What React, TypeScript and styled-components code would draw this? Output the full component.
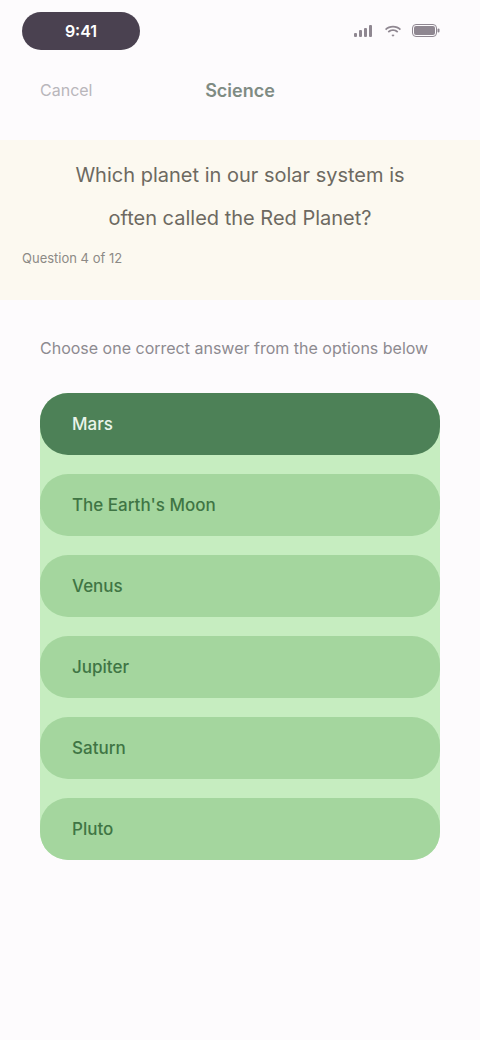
import React from "react";
import styled, { createGlobalStyle } from "styled-components";

const Global = createGlobalStyle`
  html, body { margin: 0; padding: 0; background: #fdfbfd; }
  body { font-family: Inter, "Noto Sans", "Liberation Sans", sans-serif; }
  * { box-sizing: border-box; }
`;

const Page = styled.div`
  width: 480px;
  min-height: 1040px;
  background: #fdfbfd;
  display: flex;
  flex-direction: column;
`;

const StatusBar = styled.div`
  height: 62px;
  padding: 12px 40px 0 22px;
  display: flex;
  justify-content: space-between;
  align-items: flex-start;
`;

const TimePill = styled.div`
  width: 118px;
  height: 38px;
  border-radius: 19px;
  background: #4a4150;
  color: #ffffff;
  font-size: 16px;
  font-weight: 600;
  display: flex;
  align-items: center;
  justify-content: center;
`;

const StatusIcons = styled.div`
  margin-top: 12px;
  display: flex;
  align-items: center;
  gap: 10px;
  color: #8f8791;
`;

const NavBar = styled.div`
  height: 56px;
  padding: 0 40px;
  display: grid;
  grid-template-columns: 1fr auto 1fr;
  align-items: center;
`;

const NavLink = styled.span`
  font-size: 16px;
  color: #b9b6bb;
`;

const NavTitle = styled.span`
  font-size: 18px;
  font-weight: 600;
  color: #7f8b83;
`;

const QuestionCard = styled.section`
  margin-top: 22px;
  background: #fcf9f0;
  padding: 14px 22px 34px;
  display: flex;
  flex-direction: column;
`;

const QuestionText = styled.p`
  margin: 0;
  text-align: center;
  font-size: 20px;
  line-height: 43px;
  color: #6d6961;
  padding: 0 36px;
`;

const QuestionMeta = styled.span`
  margin-top: 10px;
  font-size: 13px;
  line-height: 16px;
  color: #8c8a86;
`;

const Prompt = styled.p`
  margin: 38px 40px 35px;
  font-size: 16px;
  line-height: 20px;
  color: #8d8a90;
`;

const Options = styled.div`
  margin: 0 40px;
  background: #c6edc0;
  border-radius: 28px;
  display: flex;
  flex-direction: column;
  gap: 19px;
`;

const Option = styled.button<{ $selected?: boolean }>`
  height: 62px;
  border: none;
  border-radius: 28px;
  padding: 0 32px;
  text-align: left;
  font-family: inherit;
  font-size: 17px;
  font-weight: 500;
  background: ${(p) => (p.$selected ? "#4d8157" : "#a4d69e")};
  color: ${(p) => (p.$selected ? "#e9f4ea" : "#3f7544")};
`;

const options = ["Mars", "The Earth's Moon", "Venus", "Jupiter", "Saturn", "Pluto"];

export default function App() {
  return (
    <Page>
      <Global />
      <StatusBar>
        <TimePill>9:41</TimePill>
        <StatusIcons>
          <svg width="20" height="12" viewBox="0 0 20 12" fill="currentColor">
            <rect x="0" y="8" width="3" height="4" rx="1" />
            <rect x="5" y="5" width="3" height="7" rx="1" />
            <rect x="10" y="3" width="3" height="9" rx="1" />
            <rect x="15" y="0" width="3" height="12" rx="1" />
          </svg>
          <svg width="18" height="12" viewBox="0 0 18 12" fill="currentColor">
            <path d="M9 2.5c2.6 0 5 1 6.8 2.7l1.2-1.3C14.9 1.9 12.1.7 9 .7S3.1 1.9 1 3.9l1.2 1.3C4 3.5 6.4 2.5 9 2.5zm0 3.6c1.6 0 3 .6 4.1 1.6l1.2-1.3C12.9 5 11 4.3 9 4.3S5.1 5 3.7 6.4l1.2 1.3C6 6.7 7.4 6.1 9 6.1zm0 3.4c.6 0 1.2.2 1.6.6L9 11.8 7.4 10.1c.4-.4 1-.6 1.6-.6z" />
          </svg>
          <svg width="28" height="13" viewBox="0 0 28 13" fill="none">
            <rect x="0.5" y="0.5" width="24" height="12" rx="3.5" stroke="currentColor" />
            <rect x="2" y="2" width="21" height="9" rx="2" fill="currentColor" />
            <rect x="25.5" y="4.5" width="2" height="4" rx="1" fill="currentColor" />
          </svg>
        </StatusIcons>
      </StatusBar>
      <NavBar>
        <NavLink>Cancel</NavLink>
        <NavTitle>Science</NavTitle>
        <span />
      </NavBar>
      <QuestionCard>
        <QuestionText>Which planet in our solar system is often called the Red Planet?</QuestionText>
        <QuestionMeta>Question 4 of 12</QuestionMeta>
      </QuestionCard>
      <Prompt>Choose one correct answer from the options below</Prompt>
      <Options>
        {options.map((o, i) => (
          <Option key={o} $selected={i === 0}>
            {o}
          </Option>
        ))}
      </Options>
    </Page>
  );
}
